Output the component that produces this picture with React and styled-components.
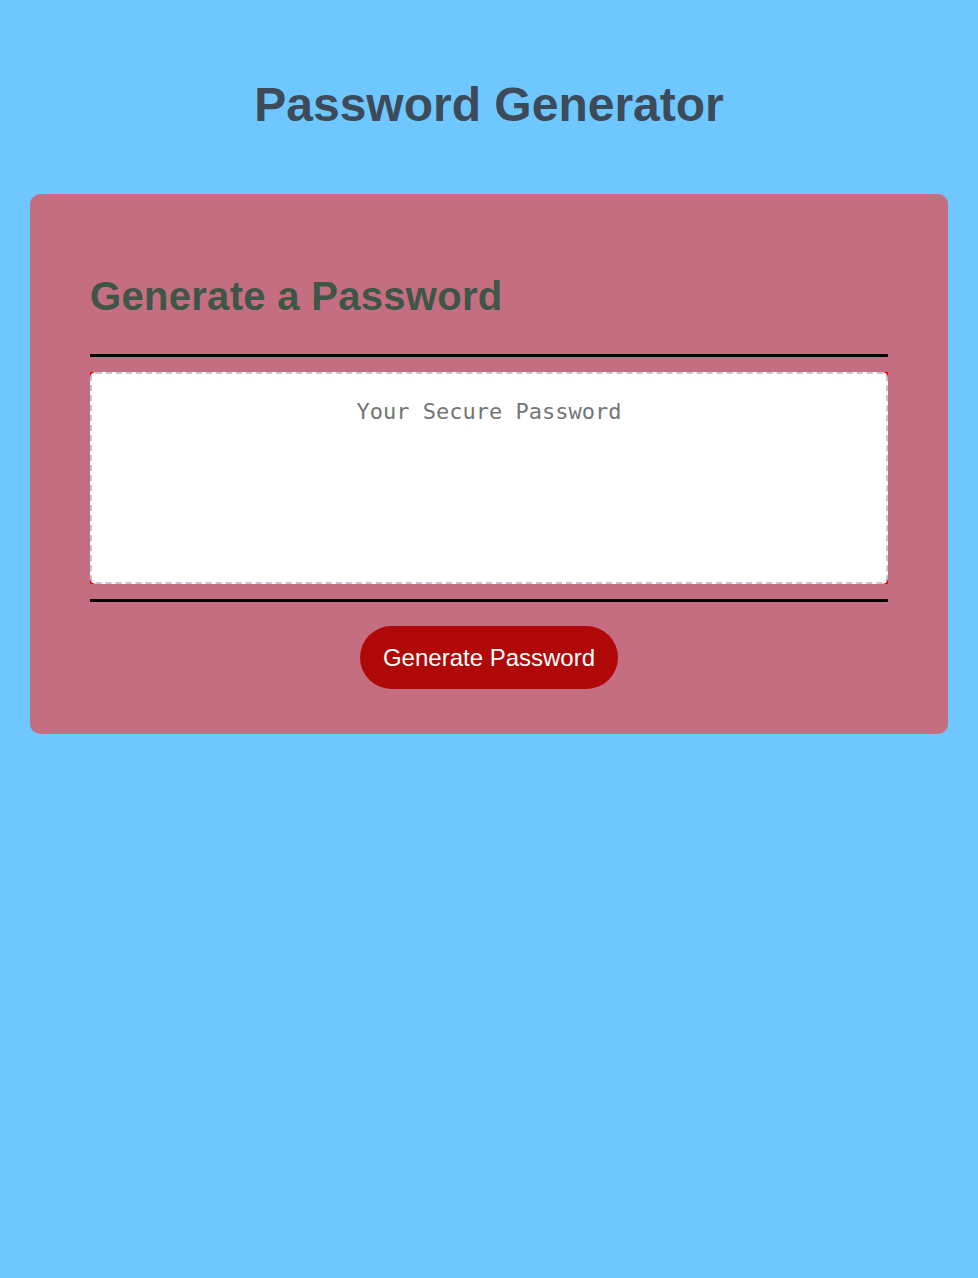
import styled, { createGlobalStyle } from "styled-components";

const GlobalStyle = createGlobalStyle`
  *, *::before, *::after {
    box-sizing: border-box;
  }
  html, body {
    margin: 0;
    padding: 0;
    min-height: 100%;
    background: #6fc7ff;
    font-family: "Liberation Sans", Arial, sans-serif;
  }
`;

const Wrapper = styled.div`
  min-height: 1278px;
  padding: 77px 30px 30px;
`;

const Title = styled.h1`
  margin: 0 0 62px;
  text-align: center;
  font-size: 48px;
  line-height: 55px;
  font-weight: 700;
  color: #3d4a5a;
`;

const Card = styled.div`
  background: #c56e82;
  border-radius: 10px;
  padding: 79px 60px 45px;
`;

const CardHeader = styled.h2`
  margin: 0 0 35px;
  font-size: 40px;
  line-height: 46px;
  font-weight: 700;
  letter-spacing: 0.3px;
  color: #3d5645;
`;

const Rule = styled.div`
  height: 3px;
  background: #000;
`;

const Frame = styled.div`
  margin: ${(p) => p.$margin};
  background: #ff0000;
  height: 212px;
`;

const PasswordBox = styled.textarea`
  display: block;
  width: 100%;
  height: 100%;
  margin: 0;
  padding: 25px 15px 0;
  border: 2px dashed #c0c7cf;
  border-radius: 6px;
  background: #fff;
  font-family: "DejaVu Sans Mono", monospace;
  font-size: 22px;
  line-height: normal;
  text-align: center;
  resize: none;
  overflow: hidden;
  outline: none;

  &::placeholder {
    color: #757575;
  }
`;

const Footer = styled.div`
  display: flex;
  justify-content: center;
  padding-top: 24px;
`;

const Button = styled.button`
  height: 63px;
  padding: 0 23px;
  border: none;
  border-radius: 32px;
  background: #b00808;
  color: #fff;
  font-family: "Liberation Sans", Arial, sans-serif;
  font-size: 24px;
  line-height: 24px;
  cursor: pointer;
`;

export default function App() {
  return (
    <>
      <GlobalStyle />
      <Wrapper>
        <Title>Password Generator</Title>
        <Card>
          <CardHeader>Generate a Password</CardHeader>
          <Rule />
          <Frame $margin="15px 0">
            <PasswordBox readOnly placeholder="Your Secure Password" />
          </Frame>
          <Rule />
          <Footer>
            <Button type="button">Generate Password</Button>
          </Footer>
        </Card>
      </Wrapper>
    </>
  );
}
